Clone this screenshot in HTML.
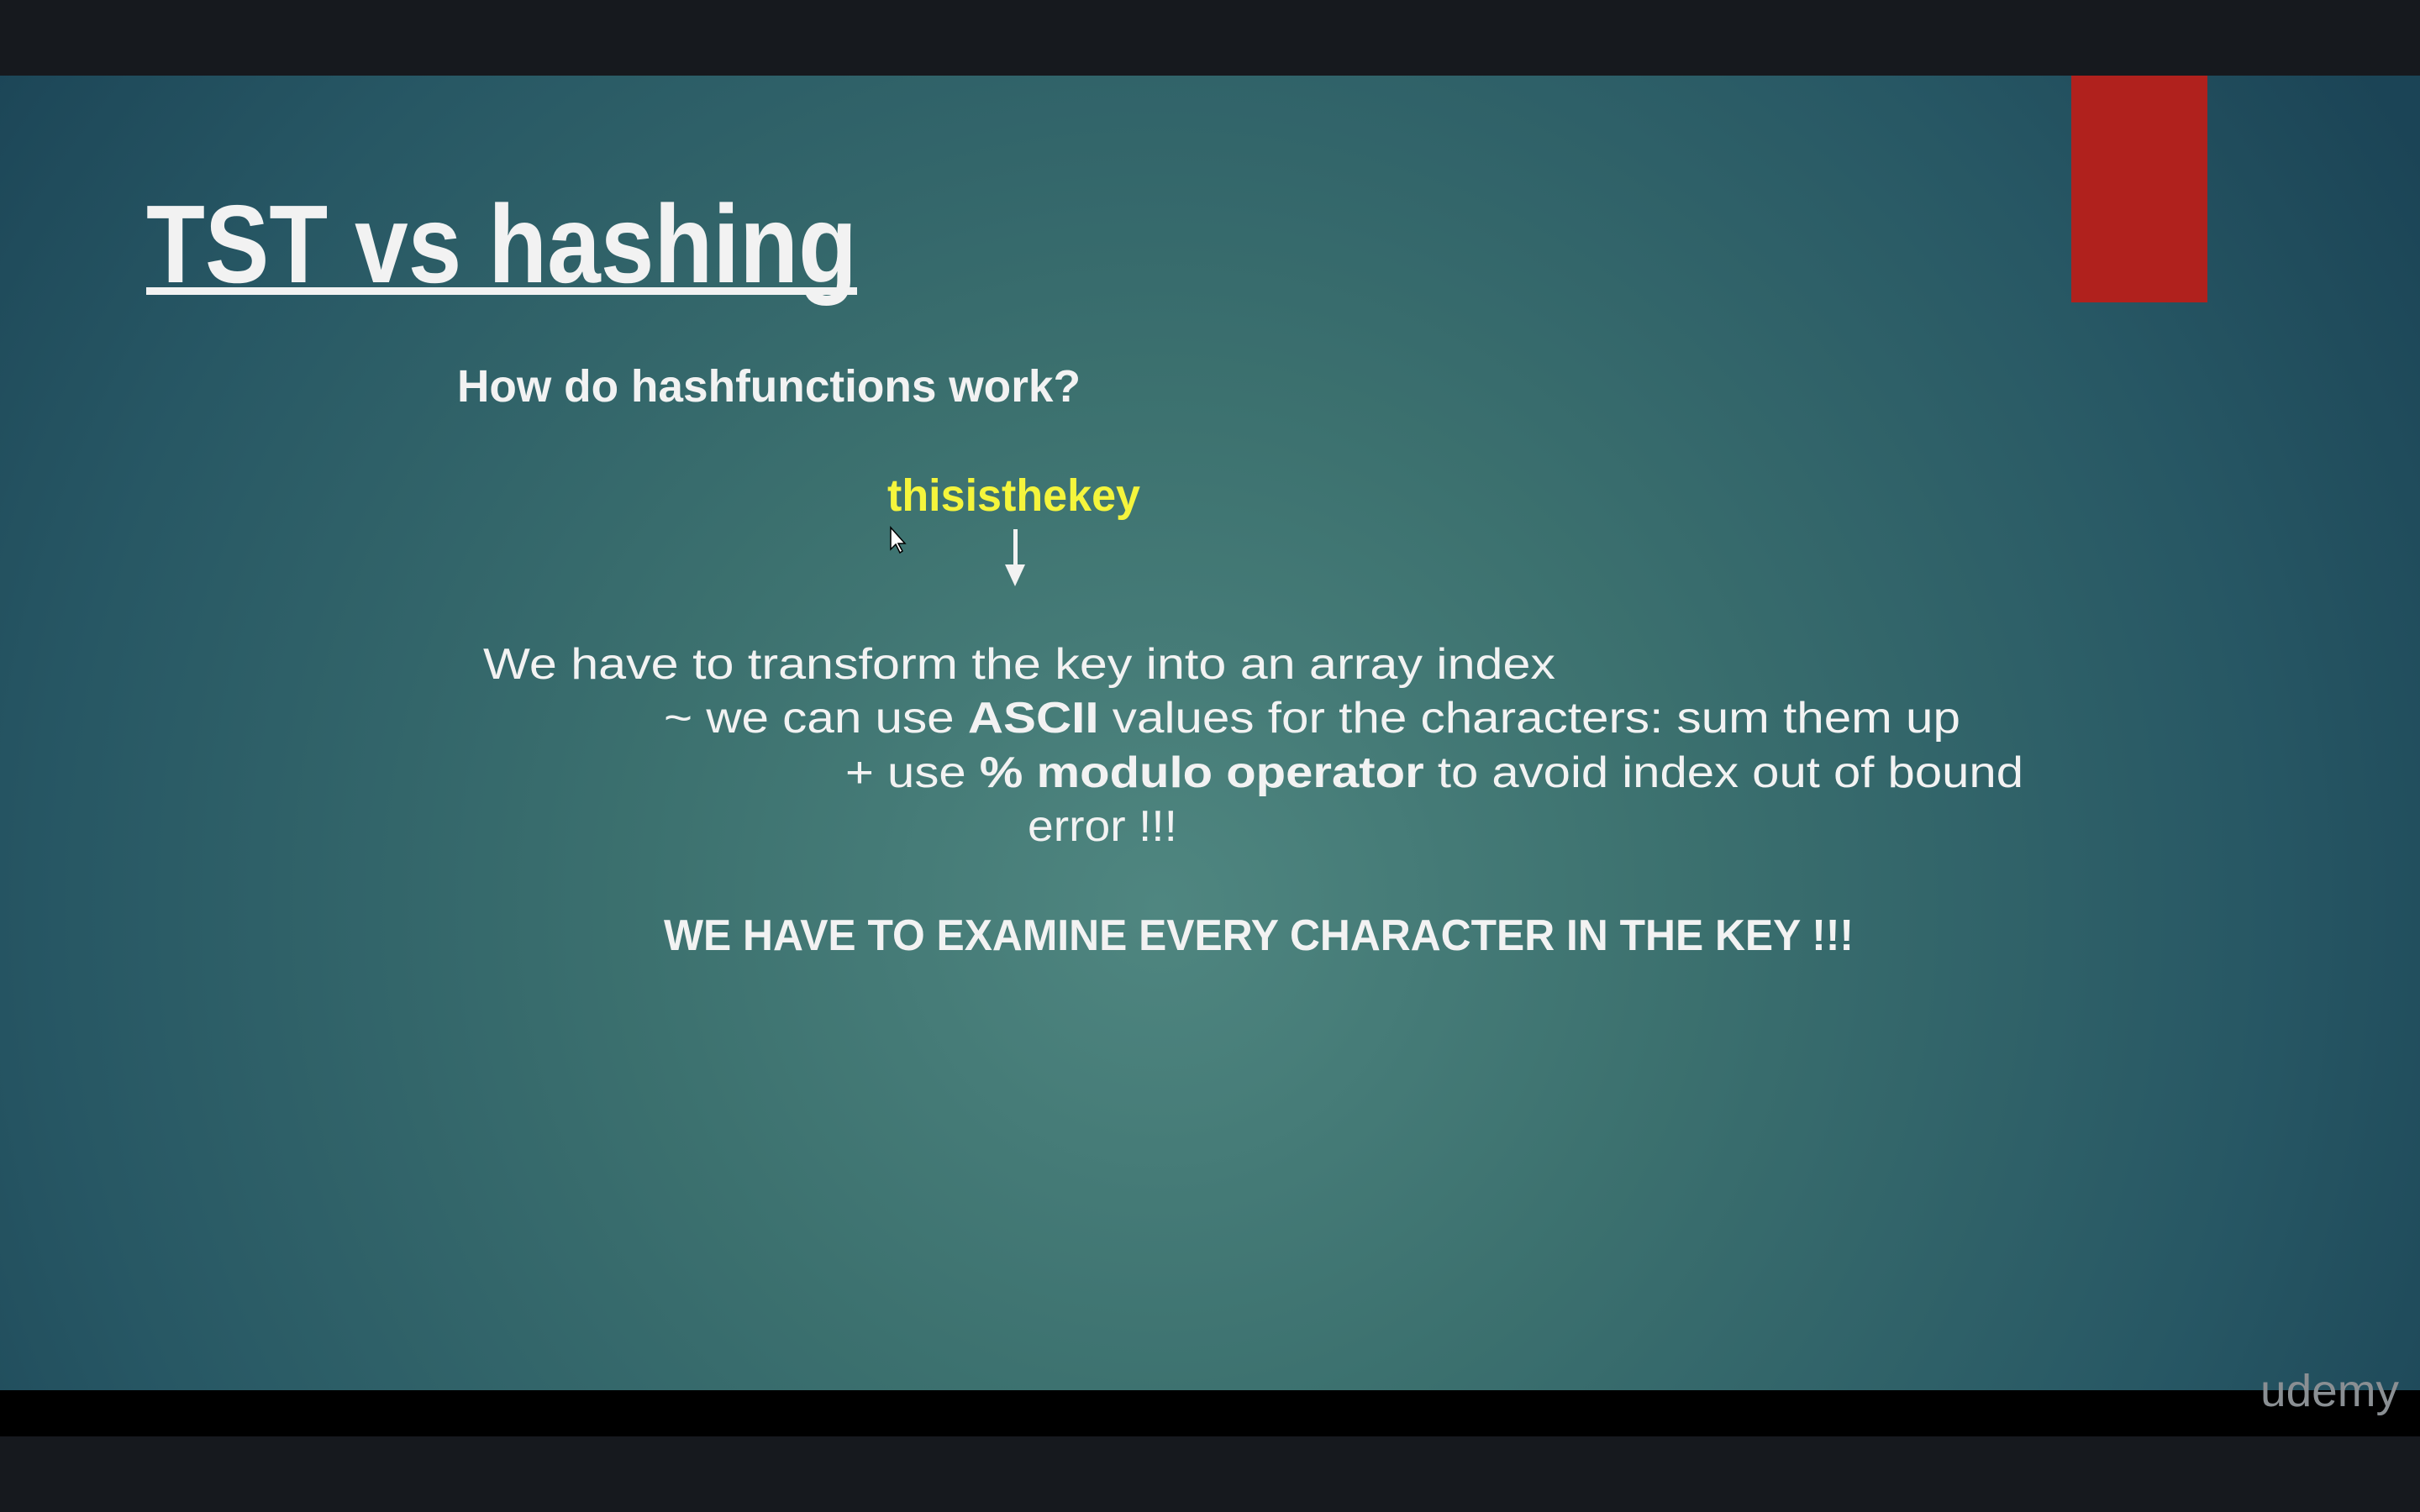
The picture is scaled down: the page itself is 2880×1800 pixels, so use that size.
<!DOCTYPE html>
<html><head><meta charset="utf-8"><style>
html,body{margin:0;padding:0;width:2880px;height:1800px;overflow:hidden;background:#16191e}
svg{display:block}
</style></head><body>
<svg width="2880" height="1800" viewBox="0 0 2880 1800" xmlns="http://www.w3.org/2000/svg">
<defs>
<radialGradient id="bg" cx="1380" cy="1080" r="1750" gradientUnits="userSpaceOnUse">
<stop offset="0" stop-color="#4f8680"/>
<stop offset="0.35" stop-color="#3c716f"/>
<stop offset="0.75" stop-color="#275764"/>
<stop offset="1" stop-color="#1b4456"/>
</radialGradient>
</defs>
<rect x="0" y="0" width="2880" height="90" fill="#16191e"/>
<rect x="0" y="90" width="2880" height="1565" fill="url(#bg)"/>
<rect x="0" y="1655" width="2880" height="55" fill="#000"/>
<rect x="0" y="1710" width="2880" height="90" fill="#16191e"/>
<rect x="2465" y="90" width="162" height="270" fill="#b0211d"/>
<g font-family="Liberation Sans, sans-serif" fill="#f2f2f2">
<text x="174" y="336" font-size="132" font-weight="bold" textLength="846" lengthAdjust="spacingAndGlyphs">TST vs hashing</text>
<rect x="174" y="342" width="846" height="9" fill="#f2f2f2"/>
<text x="544" y="478" font-size="54" font-weight="bold" textLength="742" lengthAdjust="spacingAndGlyphs">How do hashfunctions work?</text>
<text x="1056" y="608" font-size="54" font-weight="bold" fill="#f5f53c" textLength="301" lengthAdjust="spacingAndGlyphs">thisisthekey</text>
<text x="575" y="808" font-size="52" textLength="1276" lengthAdjust="spacingAndGlyphs">We have to transform the key into an array index</text>
<text x="790" y="872" font-size="52" textLength="1543" lengthAdjust="spacingAndGlyphs">~ we can use <tspan font-weight="bold">ASCII</tspan> values for the characters: sum them up</text>
<text x="1006" y="937" font-size="52" textLength="1402" lengthAdjust="spacingAndGlyphs">+ use <tspan font-weight="bold">% modulo operator</tspan> to avoid index out of bound</text>
<text x="1223" y="1001" font-size="52" textLength="178" lengthAdjust="spacingAndGlyphs">error !!!</text>
<text x="790" y="1131" font-size="52" font-weight="bold" textLength="1416" lengthAdjust="spacingAndGlyphs">WE HAVE TO EXAMINE EVERY CHARACTER IN THE KEY !!!</text>
<text x="2690" y="1674" font-size="54" fill="#8a8f93" textLength="165" lengthAdjust="spacingAndGlyphs">udemy</text>
</g>
<rect x="1206" y="630" width="5" height="48" fill="#f2f2f2"/>
<polygon points="1196,672 1220,672 1208,698" fill="#f2f2f2"/>
<polygon points="1060,628 1060,654 1066,648 1071,658 1074,656 1069,647 1077,647" fill="#fff" stroke="#000" stroke-width="1.5"/>
</svg>
</body></html>
